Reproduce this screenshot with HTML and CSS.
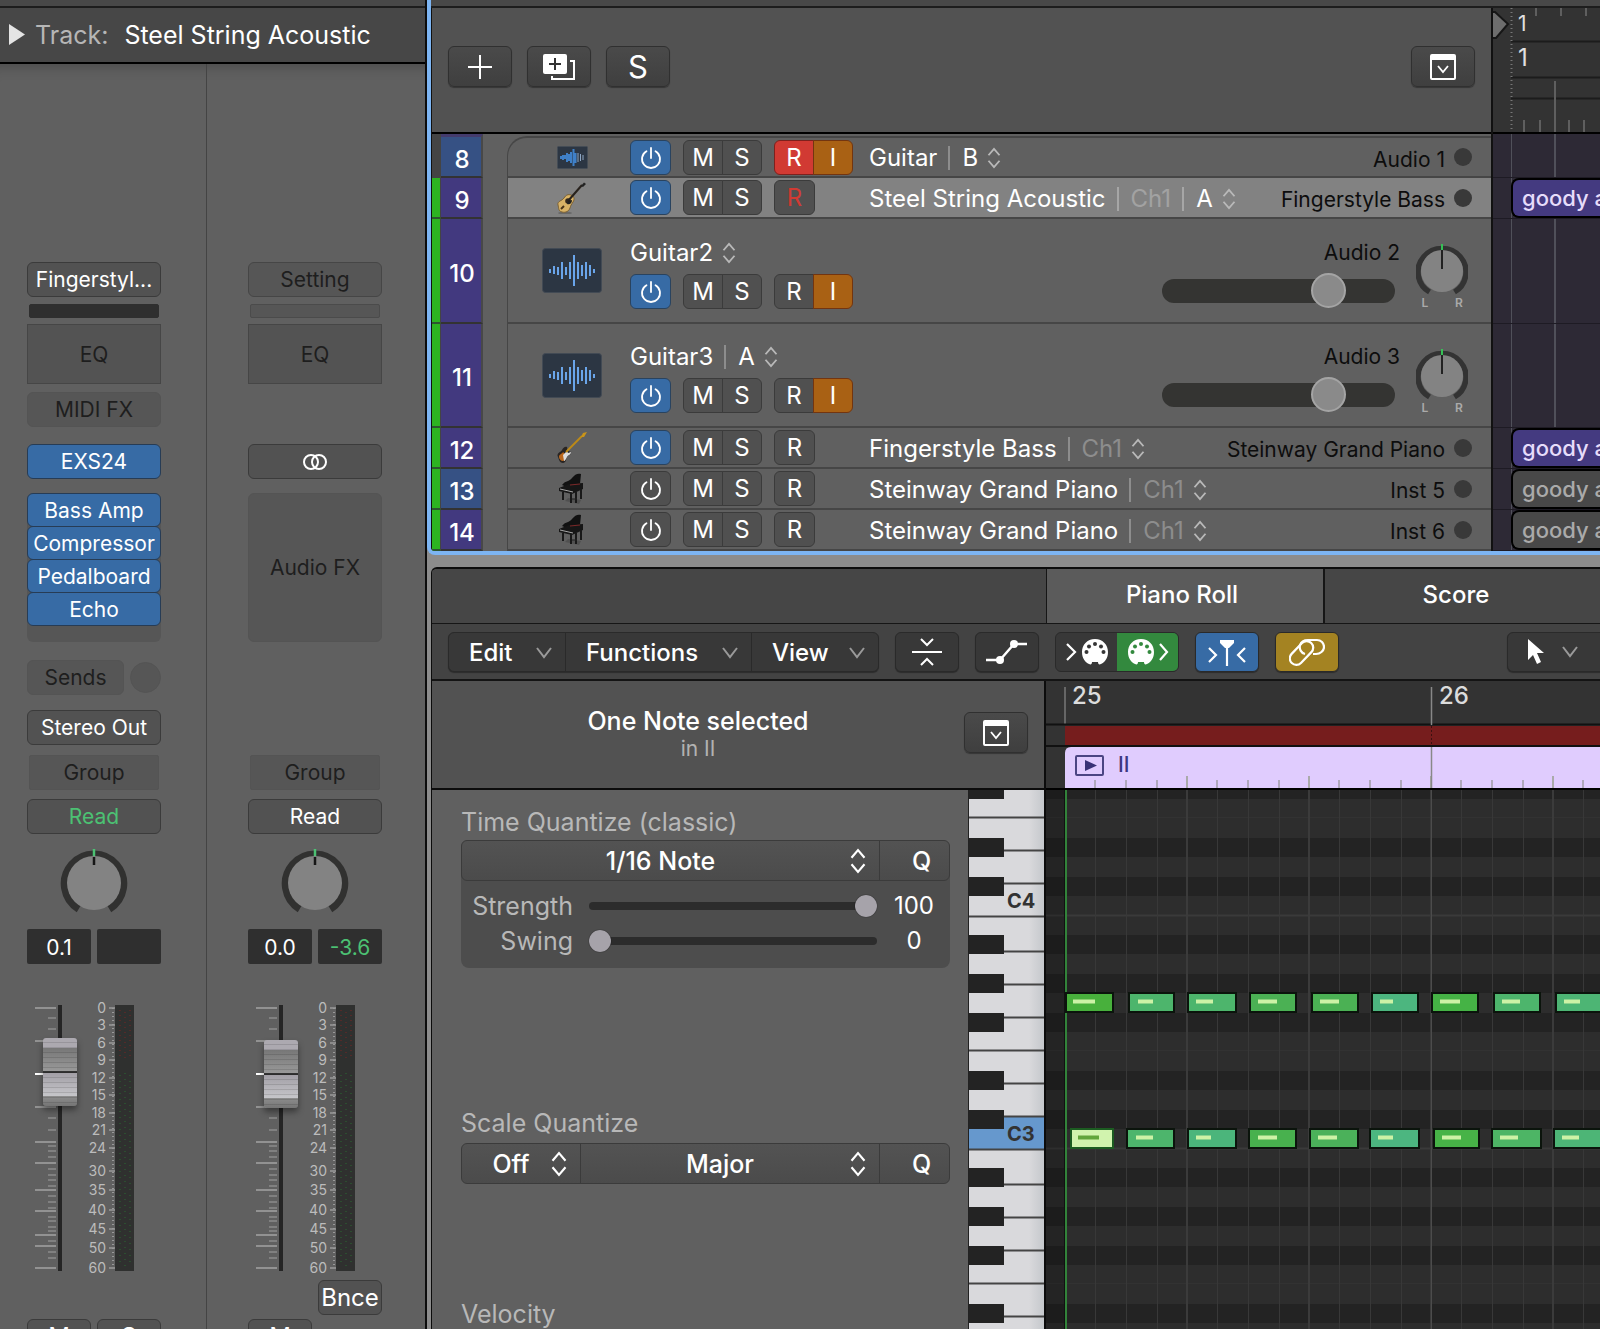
FILE: index.html
```html
<!DOCTYPE html>
<html lang="en">
<head>
<meta charset="utf-8">
<title>Steel String Acoustic</title>
<link rel="stylesheet" href="styles.css">
</head>
<body>
<svg class="defs" width="0" height="0" aria-hidden="true">
  <symbol id="power" viewBox="0 0 24 24"><path d="M7.5 5.2a9 9 0 1 0 9 0M12 2v10" fill="none" stroke="currentColor" stroke-width="1.8" stroke-linecap="round"/></symbol>
  <symbol id="updown" viewBox="0 0 16 24"><path d="M2 9l6-7 6 7M2 15l6 7 6-7" fill="none" stroke="currentColor" stroke-width="2"/></symbol>
  <symbol id="down" viewBox="0 0 16 12"><path d="M1 1l7 9 7-9" fill="none" stroke="currentColor" stroke-width="2"/></symbol>
  <symbol id="inspect" viewBox="0 0 26 26"><rect x="1" y="1" width="24" height="24" rx="1" fill="none" stroke="currentColor" stroke-width="2"/><path d="M1 1h24v5H1z" fill="currentColor"/><path d="M8 12l5 6 5-6" fill="none" stroke="currentColor" stroke-width="1.8"/></symbol>
  <symbol id="wave" viewBox="0 0 60 45"><rect x=".5" y=".5" width="59" height="44" rx="3" fill="#2c3643" stroke="#424a54"/><path d="M8 21v4M12 18v8M16 19v8M20 14v17M24 19v8M28 14v17M32 7v31M36 14v17M40 17v11M44 14v17M48 17v11M52 21v4" stroke="#6aa5ea" stroke-width="2"/></symbol>
  <symbol id="wave-s" viewBox="0 0 31 23"><rect x=".5" y=".5" width="30" height="22" rx="1" fill="#2c3643" stroke="#444c55"/><path d="M4 10v3M6 9v5M8 9v4M10 7v9M12 8v7M14 6v11M16.500 3v17M18.500 7v10" stroke="#3f80c8" stroke-width="2"/><path d="M21 7v9M23.500 8v7M26 9v5" stroke="#8ea7c4" stroke-width="1"/></symbol>
  <symbol id="acoustic" viewBox="0 0 32 32"><ellipse cx="9" cy="31" rx="7" ry="1.500" fill="#000" opacity=".2"/><path d="M2 23c-1-4 4-4 6-7s4-4 7-3 4 4 2 7-2 3-3 6-4 5-8 4-3-4-4-7z" fill="#d9b366" stroke="#7d6234"/><circle cx="12" cy="19" r="2.800" fill="#33291e"/><path d="M11 22c3 1 5-1 5-4l-4 1z" fill="#222"/><path d="M12 19L26 3" stroke="#28221d" stroke-width="2"/><path d="M25 4l3-3.500 2 1.500-3 3z" fill="#222"/><path d="M5 27l3-3" stroke="#4a3418" stroke-width="2"/></symbol>
  <symbol id="bass" viewBox="0 0 32 32"><path d="M2 25c-2-4 3-5 4-7s3-4 5-3c1 2-1 3 1 4s3 0 3 2-3 2-4 4-1 6-4 6-4-3-5-6z" fill="#292523"/><path d="M3 25c0-3 3-3 4-5l4 4c-2 1-2 5-4 5s-4-2-4-4z" fill="#bb681d"/><path d="M7 23l4-4 1 2 3-1c0 3-3 3-4 5s-2 4-3 4z" fill="#dedede"/><path d="M10 20L26 4" stroke="#bd8a16" stroke-width="1.800"/><path d="M25 5l2-4 4-1-3 5z" fill="#c99419"/></symbol>
  <symbol id="piano" viewBox="0 0 30 32"><path d="M8 28l14 3 2-4-13-2z" fill="#333" opacity=".35"/><path d="M5 12c4-5 7-3 10-7s6-5 9-4l-1 10-11 4z" fill="#111"/><path d="M2 15l10-4 14-1v6l-11 5-13-3z" fill="#161616"/><path d="M3 16l13 3" stroke="#a5a5a5"/><path d="M13 12l10-1" stroke="#7c2828"/><path d="M6 19v8M14 20v10M19 19v11M24 16v10" stroke="#191919" stroke-width="2"/><path d="M15 26h5" stroke="#222"/></symbol>
  <symbol id="pan" viewBox="0 0 68 68"><path d="M18.700 60A29.500 29.500 0 1 1 49.300 60" fill="none" stroke="#313130" stroke-width="7.500"/><circle cx="34" cy="34" r="27" fill="#838383"/><path d="M34 0v7" stroke="#4cc173" stroke-width="2.500"/><path d="M34 8v8" stroke="#161616" stroke-width="2.500"/></symbol>
  <symbol id="pan-lr" viewBox="0 0 52 54"><path d="M13.500 50A24 23.500 0 1 1 38.500 50" fill="none" stroke="#333" stroke-width="5.500"/><circle cx="26" cy="29" r="21" fill="#838383"/><path d="M26 2v6" stroke="#35c155" stroke-width="2"/><path d="M26 8v19" stroke="#222" stroke-width="2"/></symbol>
  <symbol id="ticks" viewBox="0 0 134 270">
    <path d="M31 0h4v266h-4z" fill="#252525"/>
    <path d="M8 3h21M8 36h21M8 102h21M8 137h21M8 158h21M8 185h21M8 206h21M8 230h21M8 241h21M8 263h21" stroke="#a2a2a2" stroke-width="1.500"/>
    <path d="M8 69h21" stroke="#fff" stroke-width="2"/>
    <path d="M21 13h8M21 24h8M21 113h8M21 125h8M21 141h8M21 146h8M21 152h8M21 164h8M21 170h8M21 175h8M21 181h8M21 191h8M21 197h8M21 203h8M21 212h8M21 216h8M21 222h8M21 226h8M21 236h8M21 247h8M21 253h8" stroke="#8b8b8b" stroke-width="1.500"/>
    <path d="M82 3h6M82 20h6M82 38h6M82 55h6M82 73h6M82 90h6M82 108h6M82 125h6M82 143h6M82 166h6M82 185h6M82 205h6M82 224h6M82 243h6M82 263h6" stroke="#999" stroke-width="1.500"/>
    <path d="M86 3v260" stroke="#999" stroke-width="2" stroke-dasharray="1 3"/>
    <path d="M88 0h19v266H88z" fill="#2f302f"/>
    <path d="M93 5v50M98 7v48M103 5v50" stroke="#7b2525" stroke-width="1" stroke-dasharray="1 4"/>
    <path d="M93 70v192M98 68v194M103 70v192" stroke="#2b6a33" stroke-width="1" stroke-dasharray="1 5"/>
  </symbol>
</svg>

<div class="app">
  <aside class="channel">
    <div class="strip-top"></div>
    <header class="track-title">
      <svg width="18" height="22" viewBox="0 0 18 22"><path d="M1 0l16 10.500L1 21z" fill="#e4e4e4"/></svg>
      <span class="muted">Track:</span><span>Steel String Acoustic</span>
    </header>
    <div class="strips">
      <section class="strip" aria-label="Steel String Acoustic">
        <button class="slot r1">Fingerstyl...</button>
        <div class="gain r2 dark"></div>
        <button class="slot off square r3">EQ</button>
        <button class="slot off soft r4">MIDI FX</button>
        <button class="slot on r5">EXS24</button>
        <div class="fx r6"><button class="slot on">Bass Amp</button><button class="slot on">Compressor</button><button class="slot on">Pedalboard</button><button class="slot on">Echo</button></div>
        <div class="sends r7"><button class="slot off soft">Sends</button><span class="send-knob"></span></div>
        <button class="slot r8">Stereo Out</button>
        <button class="slot off soft inset r9">Group</button>
        <button class="slot read r10">Read</button>
        <svg class="pan r11" role="img" aria-label="Pan"><use href="#pan"/></svg>
        <div class="pair r12"><input class="value" type="text" value="0.1" aria-label="Volume"><output class="value"></output></div>
        <div class="fader r13">
          <svg width="134" height="270">
            <use href="#ticks"/>
            <g class="db"><text x="79" y="8">0</text><text x="79" y="25">3</text><text x="79" y="43">6</text><text x="79" y="60">9</text><text x="79" y="78">12</text><text x="79" y="95">15</text><text x="79" y="113">18</text><text x="79" y="130">21</text><text x="79" y="148">24</text><text x="79" y="171">30</text><text x="79" y="190">35</text><text x="79" y="210">40</text><text x="79" y="229">45</text><text x="79" y="248">50</text><text x="79" y="268">60</text></g>
          </svg>
          <input type="range" min="0" max="198" value="165" aria-label="Volume fader">
        </div>
        <div class="pair r15"><button class="slot big">M</button><button class="slot big">S</button></div>
      </section>
      <section class="strip output" aria-label="Stereo Out">
        <button class="slot off r1">Setting</button>
        <div class="gain r2"></div>
        <button class="slot off square r3">EQ</button>
        <button class="slot r5" aria-label="Stereo"><svg width="26" height="18" viewBox="0 0 26 18"><g fill="none" stroke="#fff" stroke-width="2"><circle cx="9" cy="9" r="7"/><circle cx="17" cy="9" r="7"/></g></svg></button>
        <button class="slot off soft fx-empty r6">Audio FX</button>
        <button class="slot off soft inset r9">Group</button>
        <button class="slot r10">Read</button>
        <svg class="pan r11" role="img" aria-label="Pan"><use href="#pan"/></svg>
        <div class="pair r12"><input class="value" type="text" value="0.0" aria-label="Volume"><output class="value peak">-3.6</output></div>
        <div class="fader r13">
          <svg width="134" height="270">
            <use href="#ticks"/>
            <g class="db"><text x="79" y="8">0</text><text x="79" y="25">3</text><text x="79" y="43">6</text><text x="79" y="60">9</text><text x="79" y="78">12</text><text x="79" y="95">15</text><text x="79" y="113">18</text><text x="79" y="130">21</text><text x="79" y="148">24</text><text x="79" y="171">30</text><text x="79" y="190">35</text><text x="79" y="210">40</text><text x="79" y="229">45</text><text x="79" y="248">50</text><text x="79" y="268">60</text></g>
          </svg>
          <input type="range" min="0" max="198" value="163" aria-label="Volume fader">
        </div>
        <button class="slot big bounce r14">Bnce</button>
        <div class="pair r15"><button class="slot big">M</button></div>
      </section>
    </div>
  </aside>

  <main class="work">
    <section class="arrange">
      <div class="strip-top"></div>
      <div class="arrange-body">
        <div class="tracklist">
          <div class="track-tools">
            <button class="tool" aria-label="Add track"><svg width="26" height="26" viewBox="0 0 26 26"><path d="M13 1v24M1 13h24" stroke="#fff" stroke-width="2"/></svg></button>
            <button class="tool" aria-label="Duplicate track"><svg width="32" height="28" viewBox="0 0 32 28"><path d="M9 23v3h22V8h-4" fill="none" stroke="#fff" stroke-width="2"/><rect x="0" y="1" width="24" height="20" rx="2" fill="#fff"/><path d="M12 5v12M6 11h12" stroke="#333" stroke-width="2"/></svg></button>
            <button class="tool solo">S</button>
            <button class="tool end" aria-label="Track header options"><svg width="26" height="26"><use href="#inspect"/></svg></button>
          </div>
          <ol class="rows">
            <li class="row first">
              <i class="lamp idle"></i><b class="num blue">8</b>
              <div class="card"><span class="ico"><svg width="31" height="23"><use href="#wave-s"/></svg></span>
                <div class="keys"><button class="key on" aria-label="Power"><svg><use href="#power"/></svg></button><span class="duo"><button class="key">M</button><button class="key">S</button></span><span class="duo"><button class="key rec">R</button><button class="key inp">I</button></span></div>
                <span class="name">Guitar<em></em>B<svg class="ud"><use href="#updown"/></svg></span>
                <span class="chan">Audio 1</span><i class="dot"></i></div>
            </li>
            <li class="row selected">
              <i class="lamp"></i><b class="num">9</b>
              <div class="card"><span class="ico"><svg width="32" height="32"><use href="#acoustic"/></svg></span>
                <div class="keys"><button class="key on" aria-label="Power"><svg><use href="#power"/></svg></button><span class="duo"><button class="key">M</button><button class="key">S</button></span><span class="duo"><button class="key red">R</button></span></div>
                <span class="name">Steel String Acoustic<em></em><small>Ch1</small><em></em>A<svg class="ud"><use href="#updown"/></svg></span>
                <span class="chan">Fingerstyle Bass</span><i class="dot"></i></div>
            </li>
            <li class="row tall">
              <i class="lamp"></i><b class="num">10</b>
              <div class="card"><span class="ico"><svg width="60" height="45"><use href="#wave"/></svg></span>
                <div class="stack"><span class="name">Guitar2<svg class="ud"><use href="#updown"/></svg></span>
                <div class="keys"><button class="key on" aria-label="Power"><svg><use href="#power"/></svg></button><span class="duo"><button class="key">M</button><button class="key">S</button></span><span class="duo"><button class="key">R</button><button class="key inp">I</button></span></div></div>
                <label class="vol"><span>Audio 2</span><input type="range" min="0" max="198" value="149"></label>
                <div class="lr"><svg width="52" height="54"><use href="#pan-lr"/></svg><span>L</span><span>R</span></div></div>
            </li>
            <li class="row tall last-tall">
              <i class="lamp"></i><b class="num">11</b>
              <div class="card"><span class="ico"><svg width="60" height="45"><use href="#wave"/></svg></span>
                <div class="stack"><span class="name">Guitar3<em></em>A<svg class="ud"><use href="#updown"/></svg></span>
                <div class="keys"><button class="key on" aria-label="Power"><svg><use href="#power"/></svg></button><span class="duo"><button class="key">M</button><button class="key">S</button></span><span class="duo"><button class="key">R</button><button class="key inp">I</button></span></div></div>
                <label class="vol"><span>Audio 3</span><input type="range" min="0" max="198" value="149"></label>
                <div class="lr"><svg width="52" height="54"><use href="#pan-lr"/></svg><span>L</span><span>R</span></div></div>
            </li>
            <li class="row">
              <i class="lamp"></i><b class="num">12</b>
              <div class="card"><span class="ico"><svg width="32" height="32"><use href="#bass"/></svg></span>
                <div class="keys"><button class="key on" aria-label="Power"><svg><use href="#power"/></svg></button><span class="duo"><button class="key">M</button><button class="key">S</button></span><span class="duo"><button class="key">R</button></span></div>
                <span class="name">Fingerstyle Bass<em></em><small>Ch1</small><svg class="ud"><use href="#updown"/></svg></span>
                <span class="chan">Steinway Grand Piano</span><i class="dot"></i></div>
            </li>
            <li class="row">
              <i class="lamp"></i><b class="num blue">13</b>
              <div class="card"><span class="ico"><svg width="30" height="32"><use href="#piano"/></svg></span>
                <div class="keys"><button class="key" aria-label="Power"><svg><use href="#power"/></svg></button><span class="duo"><button class="key">M</button><button class="key">S</button></span><span class="duo"><button class="key">R</button></span></div>
                <span class="name">Steinway Grand Piano<em></em><small>Ch1</small><svg class="ud"><use href="#updown"/></svg></span>
                <span class="chan">Inst 5</span><i class="dot"></i></div>
            </li>
            <li class="row">
              <i class="lamp"></i><b class="num">14</b>
              <div class="card"><span class="ico"><svg width="30" height="32"><use href="#piano"/></svg></span>
                <div class="keys"><button class="key" aria-label="Power"><svg><use href="#power"/></svg></button><span class="duo"><button class="key">M</button><button class="key">S</button></span><span class="duo"><button class="key">R</button></span></div>
                <span class="name">Steinway Grand Piano<em></em><small>Ch1</small><svg class="ud"><use href="#updown"/></svg></span>
                <span class="chan">Inst 6</span><i class="dot"></i></div>
            </li>
          </ol>
        </div>
        <div class="timeline">
          <svg class="ruler" width="100%" height="124">
            <path d="M18 33.500h2000M18 69.500h2000M18 90.500h2000" stroke="#1c1c1c" stroke-width="2"/>
            <path d="M18.500 0v124" stroke="#777" stroke-width="2" stroke-dasharray="1 3"/>
            <path d="M43 0v8M68 0v8M93 0v8M31 112v12M47 112v12M76 112v12M91 112v12M62 73v51" stroke="#5f5f5f" stroke-width="2"/>
            <path d="M-2 4h4l13 12L3 30h-5z" fill="#6d6d6d" stroke="#161616" stroke-width="2"/>
            <text x="25" y="23" font-size="21">1</text><text x="25" y="58" font-size="24">1</text>
          </svg>
          <div class="lanes">
            <div class="lane first"></div>
            <div class="lane"><div class="region">goody a</div></div>
            <div class="lane tall"></div>
            <div class="lane tall last-tall"></div>
            <div class="lane"><div class="region">goody a</div></div>
            <div class="lane"><div class="region mute">goody a</div></div>
            <div class="lane"><div class="region mute">goody a</div></div>
          </div>
        </div>
      </div>
    </section>

    <section class="editor">
      <nav class="tabs"><span class="tab-space"></span><button class="tab active">Piano Roll</button><button class="tab">Score</button></nav>
      <div class="toolbar">
        <div class="menus">
          <button class="menu edit">Edit<svg class="dn"><use href="#down"/></svg></button><button class="menu functions">Functions<svg class="dn"><use href="#down"/></svg></button><button class="menu view">View<svg class="dn"><use href="#down"/></svg></button>
        </div>
        <button class="tool" aria-label="Collapse"><svg width="30" height="28" viewBox="0 0 30 28"><path d="M0 14h30M9 1l6 6 6-6M9 27l6-6 6 6" fill="none" stroke="#fff" stroke-width="2"/></svg></button>
        <button class="tool" aria-label="Automation"><svg width="42" height="28" viewBox="0 0 42 28"><path d="M0 22h14L28 6h13" fill="none" stroke="#fff" stroke-width="2.400"/><circle cx="14" cy="22" r="4" fill="#fff"/><circle cx="28" cy="6" r="4" fill="#fff"/></svg></button>
        <div class="midi">
          <button aria-label="MIDI in"><svg width="42" height="28" viewBox="0 0 42 28"><path d="M1 6l8 8-8 8" fill="none" stroke="#fff" stroke-width="2.200"/><path d="M29 1c8 0 13 6 13 13 0 6-3 10-7 12-2 1-3 0-3-2h-6c0 2-1 3-3 2-4-2-7-6-7-12C16 7 21 1 29 1z" fill="#fff"/><g fill="#363636"><circle cx="20.500" cy="14" r="2"/><circle cx="23" cy="8.500" r="2"/><circle cx="29" cy="6" r="2"/><circle cx="35" cy="8.500" r="2"/><circle cx="37.500" cy="14" r="2"/></g></svg></button>
          <button class="green" aria-label="MIDI out"><svg width="42" height="28" viewBox="0 0 42 28"><path d="M33 6l7 8-7 8" fill="none" stroke="#fff" stroke-width="2.200"/><path d="M14 1c8 0 13 6 13 13 0 6-3 10-7 12-2 1-3 0-3-2h-6c0 2-1 3-3 2-4-2-7-6-7-12C1 7 6 1 14 1z" fill="#fff"/><g fill="#33893e"><circle cx="5.500" cy="14" r="2"/><circle cx="8" cy="8.500" r="2"/><circle cx="14" cy="6" r="2"/><circle cx="20" cy="8.500" r="2"/><circle cx="22.500" cy="14" r="2"/></g></svg></button>
        </div>
        <button class="tool catch" aria-label="Catch playhead"><svg width="38" height="28" viewBox="0 0 38 28"><path d="M1 10l7 7-7 7M37 10l-7 7 7 7M19 5v23" fill="none" stroke="#fff" stroke-width="2.200"/><path d="M12 2h14v3l-5 5h-4l-5-5z" fill="#fff"/></svg></button>
        <button class="tool link" aria-label="Link"><svg width="36" height="28" viewBox="0 0 36 28"><g fill="none" stroke="#fff" stroke-width="2.200"><rect x="-14" y="-6.500" width="28" height="13" rx="6.500" transform="translate(12.500 15) rotate(-46)"/><path d="M16 16c-4-1-6-5-5-9 1-3 4-5 8-5h9c4 0 7 3 7 7s-4 7-8 7h-3"/></g></svg></button>
        <button class="tool pointer" aria-label="Pointer tool"><svg width="18" height="28" viewBox="0 0 18 28"><path d="M1 1v21l5-5 4 9 4-2-4-9h7z" fill="#fff"/></svg><svg class="dn"><use href="#down"/></svg></button>
      </div>
      <div class="editor-body">
        <div class="left">
          <header class="selection">
            <div><h2>One Note selected</h2><p>in II</p></div>
            <button class="tool" aria-label="Inspector options"><svg width="26" height="26"><use href="#inspect"/></svg></button>
          </header>
          <div class="left-body">
            <div class="inspector">
              <h3 id="tq">Time Quantize (classic)</h3>
              <div class="quant-box">
                <div class="combo"><span class="pick"><select aria-labelledby="tq"><option>1/16 Note</option></select><svg class="ud"><use href="#updown"/></svg></span><button class="q">Q</button></div>
                <label class="param"><span>Strength</span><input type="range" value="100"><output>100</output></label>
                <label class="param"><span>Swing</span><input type="range" value="0"><output>0</output></label>
              </div>
              <h3 id="sq" class="scale">Scale Quantize</h3>
              <div class="combo alone"><span class="pick short"><select aria-label="Scale quantize mode"><option>Off</option></select><svg class="ud"><use href="#updown"/></svg></span><span class="pick"><select aria-labelledby="sq"><option>Major</option></select><svg class="ud"><use href="#updown"/></svg></span><button class="q">Q</button></div>
              <h3 class="velocity">Velocity</h3>
            </div>
            <svg class="keyboard" width="75" height="540">
              <defs><linearGradient id="ivory"><stop offset=".8" stop-color="#d9d9dc"/><stop offset="1" stop-color="#c5c8cc"/></linearGradient></defs>
              <rect width="75" height="540" fill="url(#ivory)"/>
              <rect y="327" width="75" height="32" fill="#6698cd"/>
              <path d="M0 27.500h75M0 60.500h75M0 93.500h75M0 126.500h75M0 161.500h75M0 194.500h75M0 227.500h75M0 260.500h75M0 293.500h75M0 326.500h75M0 359.500h75M0 394.500h75M0 427.500h75M0 460.500h75M0 493.500h75M0 526.500h75" stroke="#444" stroke-width="2"/>
              <path d="M0-10h35V9H0zM0 48h35v19H0zM0 87h35v19H0zM0 145h35v19H0zM0 184h35v19H0zM0 223h35v19H0zM0 281h35v19H0zM0 320h35v19H0zM0 378h35v19H0zM0 417h35v19H0zM0 456h35v19H0zM0 514h35v19H0z" fill="#232323"/>
              <text x="38" y="118">C4</text><text x="38" y="351">C3</text>
            </svg>
          </div>
        </div>
        <div class="roll">
          <svg class="bar-ruler" width="100%" height="107">
            <defs>
              <pattern id="beat" x="18" width="122" height="107" patternUnits="userSpaceOnUse"><path d="M1 95v12" stroke="#aaa" stroke-width="2"/><path d="M31 99v8M62 99v8M93 99v8" stroke="#b0a8bc" stroke-width="2"/></pattern>
            </defs>
            <path d="M19 6v38" stroke="#666" stroke-width="2"/>
            <path d="M0 43.500h3000M0 65h3000" stroke="#111" stroke-width="2"/>
            <rect x="19" y="45" width="100%" height="19" fill="#761d1d"/>
            <path d="M19 107V72q0-6 6-6h3000v41z" fill="#e0ccfe"/>
            <rect x="22" y="66" width="100%" height="41" fill="url(#beat)"/>
            <path d="M385.500 6v38M385.500 66v41" stroke="#888" stroke-width="1.500"/><path d="M385.500 45v20" stroke="#3b1111" stroke-dasharray="2 2"/>
            <text class="bar" x="26" y="23">25</text><text class="bar" x="393" y="23">26</text>
            <rect x="30" y="75" width="27" height="19" rx="1" fill="none" stroke="#4b4583" stroke-width="2"/><path d="M39 79l12 5.500L39 90z" fill="#383276"/>
            <text class="rname" x="72" y="91">II</text>
          </svg>
          <svg class="grid" width="100%" height="540">
            <defs>
              <pattern id="subs" x="18" width="122" height="540" patternUnits="userSpaceOnUse"><path d="M1 0v540" stroke="#3b3b3b" stroke-width="2"/><path d="M31.500 0v540M62.500 0v540M93.500 0v540" stroke="#383838" stroke-width="1"/></pattern>
            </defs>
            <rect width="100%" height="540" fill="#2d2d2d"/>
            <g fill="#232323"><rect y="-10" width="100%" height="19"/><rect y="48" width="100%" height="19"/><rect y="87" width="100%" height="19"/><rect y="145" width="100%" height="19"/><rect y="184" width="100%" height="19"/><rect y="223" width="100%" height="19"/><rect y="281" width="100%" height="19"/><rect y="320" width="100%" height="19"/><rect y="378" width="100%" height="19"/><rect y="417" width="100%" height="19"/><rect y="456" width="100%" height="19"/><rect y="514" width="100%" height="19"/></g>
            <path d="M0 125.500h3000M0 358.500h3000" stroke="#3a3a3a" stroke-width="2"/><path d="M0 27.500h3000M0 260.500h3000M0 493.500h3000" stroke="#323232"/>
            <rect x="22" width="100%" height="540" fill="url(#subs)"/>
            <path d="M385.500 0v540" stroke="#4c4c4c"/>
            <rect width="18" height="540" fill="#000" opacity=".2"/>
            <path d="M18.500 0v540" stroke="#111"/><path d="M20 0v540" stroke="#32833a" stroke-width="2"/>
            <g stroke="#0b140c" stroke-width="2">
              <rect x="20" y="203" width="47" height="19" fill="#48b03c"/><rect x="83" y="203" width="45" height="19" fill="#4db56c"/><rect x="142" y="203" width="48" height="19" fill="#4db56c"/><rect x="204" y="203" width="46" height="19" fill="#4bb154"/><rect x="266" y="203" width="46" height="19" fill="#4bb154"/><rect x="326" y="203" width="46" height="19" fill="#4cb67f"/><rect x="386" y="203" width="46" height="19" fill="#45b345"/><rect x="448" y="203" width="46" height="19" fill="#4db56c"/><rect x="510" y="203" width="46" height="19" fill="#4db574"/>
              <rect x="25" y="339" width="42" height="19" fill="#d1f3ae" stroke="#1c5c21"/><rect x="81" y="339" width="47" height="19" fill="#4db56c"/><rect x="142" y="339" width="48" height="19" fill="#4bb57b"/><rect x="203" y="339" width="47" height="19" fill="#48b14e"/><rect x="264" y="339" width="48" height="19" fill="#4bb15a"/><rect x="324" y="339" width="49" height="19" fill="#4cb680"/><rect x="388" y="339" width="45" height="19" fill="#47b347"/><rect x="446" y="339" width="49" height="19" fill="#4db565"/><rect x="508" y="339" width="49" height="19" fill="#4db576"/>
            </g>
            <path d="M27 211.500h22M92 211.500h15M150 211.500h17M212 211.500h19M274 211.500h19M334 211.500h13M394 211.500h20M456 211.500h18M518 211.500h16M90 347.500h17M150 347.500h15M212 347.500h19M272 347.500h19M332 347.500h15M396 347.500h19M454 347.500h18M516 347.500h17" stroke="#cdf2a6" stroke-width="4"/>
            <path d="M32 347.500h21" stroke="#62a53c" stroke-width="4"/>
          </svg>
        </div>
      </div>
    </section>
  </main>
</div>
</body>
</html>
```

FILE: styles.css
```css
* { box-sizing: border-box; }

body {
  margin: 0;
  background: #606060;
  color: #fff;
  font: 24px/30px Inter, "Liberation Sans", sans-serif;
}

button, input, select, output { font: inherit; color: inherit; margin: 0; }
button { padding: 0; border: 0; background: none; display: flex; align-items: center; justify-content: center; white-space: nowrap; }
h2, h3, p, ol { margin: 0; padding: 0; font-weight: 400; font-size: inherit; }
svg { display: block; flex: none; }
.defs { position: absolute; }

.app { display: flex; height: 100vh; overflow: hidden; }

.strip-top { height: 8px; flex: none; background: #484848; border-bottom: 2px solid #1d1d1d; }

/* Channel strips */
.channel { flex: 0 0 427px; border-right: 2px solid #0c0c0c; background: #606060; display: flex; flex-direction: column; }
.track-title { height: 56px; flex: none; display: flex; align-items: center; padding-left: 8px; background: #474747; border-bottom: 2px solid #000; font-size: 25px; }
.track-title .muted { color: #b6b6b6; margin: 0 16px 0 9px; }
.strips { display: flex; flex: 1; min-height: 0; box-shadow: inset 0 16px 14px -14px rgba(0, 0, 0, .25); }
.strip {
  width: 207px;
  padding: 198px 0 0 27px;
  border-right: 1px solid #444;
  display: grid;
  grid-template-columns: 134px;
  grid-template-rows: 42px 20px 68px 52px 49px 167px 50px 45px 44px 50px 80px 76px 275px 39px 35px;
  align-items: start;
  font-size: 21px;
}
.strip.output { padding-left: 41px; border: 0; width: auto; }
.r1 { grid-row: 1; } .r2 { grid-row: 2; } .r3 { grid-row: 3; } .r4 { grid-row: 4; } .r5 { grid-row: 5; }
.r6 { grid-row: 6; } .r7 { grid-row: 7; } .r8 { grid-row: 8; } .r9 { grid-row: 9; } .r10 { grid-row: 10; }
.r11 { grid-row: 11; } .r12 { grid-row: 12; } .r13 { grid-row: 13; } .r14 { grid-row: 14; } .r15 { grid-row: 15; }

.slot { height: 35px; padding-top: 1px; border: 1px solid #3b3b3b; border-radius: 6px; background: #525252; }
.slot.off { color: #1e1e1e; border-color: #464646; background: #565656; }
.slot.soft { border-color: #545454; }
.slot.square { height: 60px; border-radius: 0; background: #535353; }
.slot.inset { margin: 0 2px; border-radius: 2px; }
.slot.on { background: #376ba5; border-color: #273c55; }
.slot.read { color: #4cc173; }
.slot.big { font-size: 24px; }
.gain { height: 14px; margin: 0 2px; border: 1px solid #4b4b4b; border-radius: 2px; background: #565656; }
.gain.dark { background: #2f2f2f; border-color: #2f2f2f; }
.fx { height: 149px; display: flex; flex-direction: column; border-radius: 6px; background: #565656; }
.fx .slot { height: 34px; margin-bottom: -1px; flex: none; }
.fx-empty { height: 149px; }
.sends { display: grid; grid-template-columns: 97px 31px; gap: 6px; align-items: center; }
.send-knob { height: 31px; border-radius: 50%; background: #565656; border: 1px solid #545454; }
.pan { width: 68px; height: 68px; justify-self: center; }
.pair { display: grid; grid-template-columns: 64px 64px; gap: 6px; }
.value { width: 64px; height: 35px; padding: 1px 0 0; border: 0; border-radius: 2px; background: #2f2f2f; text-align: center; line-height: 35px; }
.peak { color: #4cc173; }
.bounce { width: 64px; justify-self: end; }

.fader { position: relative; }
.fader svg { overflow: visible; }
.db { font-size: 14px; fill: #bcbcbc; text-anchor: end; }
.fader input {
  position: absolute;
  left: 16px;
  top: 0;
  width: 34px;
  height: 266px;
  appearance: none;
  background: none;
  writing-mode: vertical-lr;
  direction: rtl;
}
.fader input::-webkit-slider-thumb {
  appearance: none;
  width: 34px;
  height: 68px;
  border-radius: 3px;
  box-shadow: 0 4px 6px rgba(0, 0, 0, .4);
  background:
    repeating-linear-gradient(transparent 0 4px, rgba(0, 0, 0, .12) 4px 5px),
    linear-gradient(#aca9b0 0 10px, #777 10px, #999 33px, #333 33px 35px, #a29fa6 35px, #c6c6ca 58px, #8d8d8d 58px, #757575);
}

/* Arrange window */
.work { flex: 1; min-width: 0; display: flex; flex-direction: column; background: #8c8c8c; }
.arrange { flex: none; border: solid #7db5f3; border-width: 0 0 4px 4px; border-radius: 0 0 0 8px; overflow: hidden; background: #606060; }
.arrange-body { display: flex; border-left: 1px solid #111; }
.tracklist { flex: 0 0 1061px; border-right: 2px solid #111; }
.track-tools { height: 126px; padding: 38px 16px 0; display: flex; gap: 15px; align-items: flex-start; background: #525252; border-bottom: 2px solid #000; }
.tool { width: 64px; height: 41px; flex: none; border: 1px solid #303030; border-radius: 6px; background: linear-gradient(#4a4a4a, #3f3f3f); box-shadow: 0 1px 1px rgba(0, 0, 0, .35); }
.tool.solo { font-size: 31px; }
.tool.end { margin-left: auto; }

.rows { list-style: none; background: #606060; }
.row { display: grid; grid-template-columns: 9px 42px 24px 1fr; height: 41px; }
.row.first { height: 44px; }
.row.tall { height: 105px; }
.row.last-tall { height: 104px; }
.lamp { background: #2cb421; border-bottom: 2px solid #2c5530; border-right: 1px solid #444; }
.lamp.idle { background: #444; border-color: #444; }
.num { display: flex; align-items: center; justify-content: center; padding: 6px 0 0 2px; font-weight: 500; background: #42397f; border-bottom: 2px solid #333; border-right: 2px solid #484848; }
.num.blue { background: #365184; }
.row.first .num { border-top: 3px solid #443b6c; }
.card { grid-column: 4; display: flex; align-items: center; min-width: 0; padding: 0 19px 0 34px; border: solid #464646; border-width: 0 0 2px 1px; }
.first .card { margin-top: 2px; border-top-width: 2px; border-top-left-radius: 20px; }
.selected .card { background: #828282; }
.ico { width: 60px; margin-right: 28px; display: flex; justify-content: center; flex: none; }
.keys { display: flex; gap: 12px; flex: none; }
.key { width: 41px; height: 35px; padding-top: 1px; border: 1px solid #3b3b3b; border-radius: 6px; background: #505050; font-size: 24px; }
.key svg { width: 24px; height: 24px; }
.key.on { background: #376ba5; border-color: #29435f; }
.duo { display: flex; width: 79px; }
.duo .key + .key { width: 40px; margin-left: -1px; border-radius: 0 6px 6px 0; }
.duo .key:has(+ .key) { width: 40px; border-radius: 6px 0 0 6px; }
.key.rec { background: #d13a33; border-color: #7d211d; }
.key.inp { background: #a96114; border-color: #733510; }
.key.red { color: #d13a33; }
.name { display: flex; align-items: center; margin-left: 16px; padding-top: 2px; white-space: nowrap; }
.name em { width: 2px; height: 24px; margin: 0 12px 0 11px; background: #8d8d8d; }
.name small { font-size: 24px; color: #8d8d8d; }
.selected .name em { background: #a6a6a6; }
.selected .name small { color: #a2a2a2; }
.ud { width: 16px; height: 22px; margin-left: 8px; color: #b9b9b9; }
.chan { margin-left: auto; padding-top: 5px; font-size: 21px; color: #0d0d0d; white-space: nowrap; }
.dot { width: 18px; height: 18px; margin-left: 9px; border-radius: 50%; background: #393939; }
.stack { display: flex; flex-direction: column; gap: 6px; padding-top: 3px; }
.stack .name { margin-left: 0; }
.vol { margin-left: auto; width: 233px; display: flex; flex-direction: column; gap: 5px; padding-top: 5px; }
.vol span { align-self: flex-end; margin-right: -5px; font-size: 21px; color: #0d0d0d; }
.vol input { appearance: none; width: 100%; height: 36px; background: none; }
.vol input::-webkit-slider-runnable-track { height: 24px; border-radius: 12px; background: #343432; }
.vol input::-webkit-slider-thumb { appearance: none; width: 35px; height: 35px; margin-top: -6px; border-radius: 50%; border: 2px solid #a4a4a4; background: #8a8a8a; }
.lr { width: 52px; margin: 10px 2px 0 21px; display: grid; grid-template-columns: 18px 18px; justify-content: space-between; font: 600 12px/13px Inter, sans-serif; color: #aaa; text-align: center; }
.lr svg { grid-column: 1 / 3; }
.card:has(.lr) { padding-right: 21px; }

.timeline { flex: 1; min-width: 0; overflow: hidden; background: #333; }
.ruler { height: 126px; border-bottom: 2px solid #000; fill: #e0e0e0; }
.lanes { background: linear-gradient(#50505a, #50505a) 18px 0 / 1px 100% no-repeat, linear-gradient(#50505a, #50505a) 61px 0 / 2px 100% no-repeat, #2d2935; }
.lane { height: 41px; border-bottom: 1px solid #1e1b24; padding-left: 18px; overflow: hidden; }
.lane.first { height: 44px; }
.lane.tall { height: 105px; }
.lane.last-tall { height: 104px; }
.region { height: 40px; padding-left: 9px; border: 2px solid #000; border-right: 0; border-radius: 8px 0 0 8px; background: #443a80; color: #e6dcfa; font-size: 22px; font-weight: 500; line-height: 36px; white-space: nowrap; overflow: hidden; }
.region.mute { background: #484848; color: #aaa; }

/* Editor */
.editor { flex: 1; min-height: 0; margin: 12px 0 0 4px; display: flex; flex-direction: column; border: solid #0c0c0c; border-width: 2px 0 0 1px; border-top-left-radius: 6px; overflow: hidden; background: #606060; font-weight: 500; }
.tabs { display: flex; height: 55px; flex: none; background: #464646; border-bottom: 1px solid #161616; overflow: hidden; }
.tab-space { flex: 0 0 614px; }
.tab { flex: 0 0 268px; padding: 0 6px 2px 0; font-weight: 500; }
.tab.active { flex-basis: 279px; background: #5b5b5b; border: solid #161616; border-width: 0 2px 0 1px; }
.toolbar { display: flex; align-items: center; gap: 16px; height: 57px; flex: none; padding: 0 0 0 16px; background: #434343; border-bottom: 2px solid #141414; overflow: hidden; }
.toolbar .tool, .menus, .midi { height: 40px; background: #383838; border-color: #2a2a2a; }
.menus { display: flex; border: 1px solid #2a2a2a; border-radius: 6px; box-shadow: 0 1px 1px rgba(0, 0, 0, .35); }
.menu { justify-content: space-between; padding: 2px 13px 0 20px; border-left: 1px solid #2a2a2a; }
.menu:first-child { border-left: 0; }
.menu.edit { width: 116px; }
.menu.functions { width: 186px; }
.menu.view { width: 127px; }
.dn { width: 16px; height: 12px; color: #999; }
.midi { display: flex; border: 1px solid #2a2a2a; border-radius: 6px; overflow: hidden; }
.midi button { width: 61px; }
.midi .green { background: #33893e; }
.toolbar .catch { background: #376ba5; }
.toolbar .link { background: #a48322; }
.toolbar .pointer { width: 100px; justify-content: flex-start; gap: 17px; padding-left: 19px; margin-left: auto; margin-right: -7px; }

.editor-body { display: flex; flex: 1; min-height: 0; }
.left { flex: 0 0 614px; border-right: 2px solid #0c0c0c; display: flex; flex-direction: column; }
.selection { height: 109px; flex: none; display: grid; grid-template-columns: 1fr 64px; padding: 25px 16px 0 0; background: #525252; border-bottom: 2px solid #0c0c0c; text-align: center; }
.selection h2 { font-size: 25px; font-weight: 500; }
.selection .tool { margin-top: 6px; }
.selection p { font-size: 21px; line-height: 26px; color: #b2b2b2; font-weight: 400; }
.left-body { display: flex; flex: 1; min-height: 0; }
.inspector { flex: 1; min-width: 0; padding: 17px 19px 0 29px; font-size: 25px; }
.inspector h3 { color: #b8b8b8; line-height: 30px; }
.inspector h3.scale { margin-top: 140px; }
.inspector h3.velocity { margin-top: 115px; }
.quant-box { height: 128px; margin-top: 3px; border-radius: 8px; background: #4d4d4d; }
.combo { display: flex; height: 41px; border: 1px solid #3b3b3b; border-radius: 6px; background: linear-gradient(#535353, #4b4b4b); }
.combo.alone { margin-top: 5px; }
.pick { position: relative; flex: 1; display: flex; align-items: center; }
.pick + .pick { border-left: 1px solid #3b3b3b; }
.pick.short { flex: 0 0 118px; }
.pick select { appearance: none; width: 100%; height: 100%; border: 0; padding: 0 20px 0 0; background: none; font-weight: 500; text-align: center; text-align-last: center; }
.pick .ud { position: absolute; right: 12px; width: 18px; height: 26px; color: #fff; pointer-events: none; }
.q { width: 70px; padding-left: 14px; border-left: 1px solid #3b3b3b; }
.param { display: grid; grid-template-columns: 112px 288px 42px; column-gap: 16px; height: 35px; align-items: center; margin-top: 7px; font-weight: 400; }
.param + .param { margin-top: 0; }
.param span { text-align: right; color: #b8b8b8; }
.param output { font-size: 24px; text-align: center; white-space: nowrap; }
.param input { appearance: none; width: 100%; height: 24px; background: none; }
.param input::-webkit-slider-runnable-track { height: 8px; border-radius: 4px; background: #2c2c2c; }
.param input::-webkit-slider-thumb { appearance: none; width: 22px; height: 22px; margin-top: -7px; border-radius: 50%; background: #a6a3aa; box-shadow: 0 0 1px #000; }
.keyboard { font-size: 20px; font-weight: 700; fill: #333; box-shadow: -1px 0 #222; }
.roll { flex: 1; min-width: 0; overflow: hidden; background: #333; }
.bar-ruler { height: 109px; border-bottom: 2px solid #000; }
.bar { font-size: 24px; fill: #dcdcdc; }
.rname { font-size: 21px; fill: #3d3780; }
```
